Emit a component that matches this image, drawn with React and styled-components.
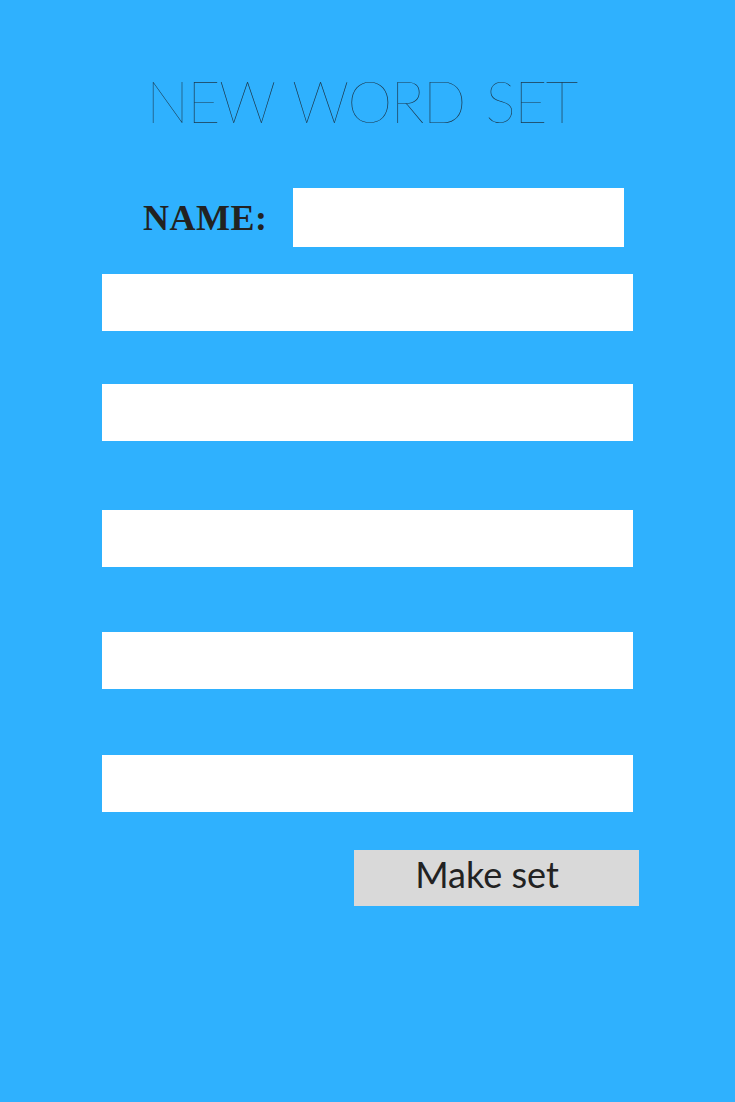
import React from "react";
import styled, { createGlobalStyle } from "styled-components";

const GlobalStyle = createGlobalStyle`
  html, body {
    margin: 0;
    padding: 0;
    background: #2fb1fe;
  }
`;

const Page = styled.div`
  width: 735px;
  height: 1102px;
  background: #2fb1fe;
  display: flex;
  flex-direction: column;
  align-items: center;
  box-sizing: border-box;
  padding-top: 72px;
`;

const Title = styled.h1`
  margin: 0;
  font-family: "Lato", "Liberation Sans", sans-serif;
  font-weight: 100;
  font-size: 57px;
  line-height: 58px;
  letter-spacing: -1.5px;
  word-spacing: 6px;
  color: #1c3446;
  text-align: center;
  padding-right: 12px;
`;

const NameRow = styled.div`
  width: 531px;
  margin-top: 58px;
  display: flex;
  align-items: center;
  justify-content: space-between;
  padding-right: 9px;
  box-sizing: border-box;
`;

const NameLabel = styled.label`
  font-family: "Liberation Serif", serif;
  font-weight: bold;
  font-size: 36px;
  color: #222;
  letter-spacing: 0.5px;
  margin-left: 41px;
`;

const Field = styled.input`
  display: block;
  box-sizing: border-box;
  border: none;
  outline: none;
  background: #ffffff;
  width: ${(p) => p.$width || 531}px;
  height: ${(p) => p.$height || 57}px;
  margin-top: ${(p) => p.$gap || 0}px;
  padding: 0 12px;
  font-size: 20px;
`;

const ButtonRow = styled.div`
  width: 531px;
  display: flex;
  justify-content: flex-end;
  margin-top: 38px;
  margin-right: -12px;
`;

const MakeButton = styled.button`
  width: 285px;
  height: 56px;
  border: none;
  background: #d9d9d9;
  font-family: "Lato", "Liberation Sans", sans-serif;
  font-weight: 400;
  font-size: 36px;
  color: #222;
  padding: 0 19px 8px 0;
  cursor: pointer;
`;

const rowGaps = [27, 53, 69, 65, 66];

export default function App() {
  return (
    <>
      <GlobalStyle />
      <Page>
        <Title>NEW WORD SET</Title>
        <NameRow>
          <NameLabel>NAME:</NameLabel>
          <Field $width={331} $height={59} />
        </NameRow>
        {rowGaps.map((gap, i) => (
          <Field key={i} $gap={gap} />
        ))}
        <ButtonRow>
          <MakeButton>Make set</MakeButton>
        </ButtonRow>
      </Page>
    </>
  );
}
